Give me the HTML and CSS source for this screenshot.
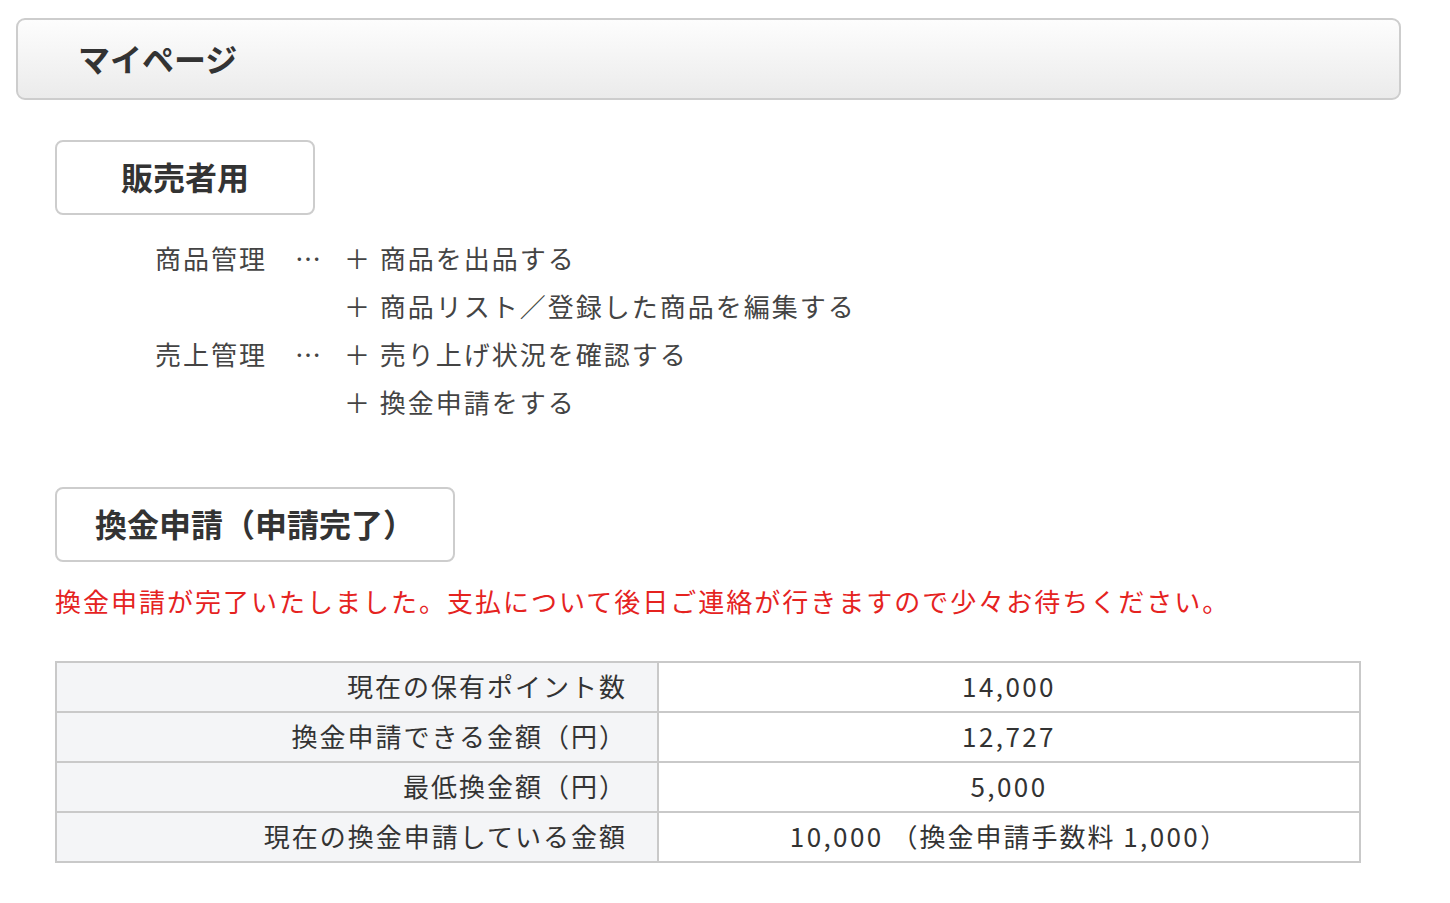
FILE: index.html
```html
<!DOCTYPE html>
<html lang="ja">
<head>
<meta charset="utf-8">
<title>マイページ</title>
<link rel="stylesheet" href="styles.css">
</head>
<body>
<div class="page">
  <header class="page-head">
    <h1 class="page-title">マイページ</h1>
  </header>

  <section class="section seller">
    <h2 class="section-title title-narrow">販売者用</h2>
    <div class="menu">
      <div class="menu-label">商品管理</div>
      <div class="menu-dots">…</div>
      <div class="menu-item">＋ 商品を出品する</div>
      <div class="menu-label"></div>
      <div class="menu-dots"></div>
      <div class="menu-item">＋ 商品リスト／登録した商品を編集する</div>
      <div class="menu-label">売上管理</div>
      <div class="menu-dots">…</div>
      <div class="menu-item">＋ 売り上げ状況を確認する</div>
      <div class="menu-label"></div>
      <div class="menu-dots"></div>
      <div class="menu-item">＋ 換金申請をする</div>
    </div>
  </section>

  <section class="section exchange">
    <h2 class="section-title title-wide">換金申請（申請完了）</h2>
    <p class="notice">換金申請が完了いたしました。支払について後日ご連絡が行きますので少々お待ちください。</p>
    <table class="info">
      <tr><th>現在の保有ポイント数</th><td><span class="num">14,000</span></td></tr>
      <tr><th>換金申請できる金額（円）</th><td><span class="num">12,727</span></td></tr>
      <tr><th>最低換金額（円）</th><td><span class="num">5,000</span></td></tr>
      <tr><th>現在の換金申請している金額</th><td><span class="num">10,000</span> （換金申請手数料 <span class="num">1,000</span>）</td></tr>
    </table>
  </section>
</div>
</body>
</html>
```

FILE: styles.css
```css
* { box-sizing: border-box; }

body {
  margin: 0;
  background: #fff;
  color: #333;
  font-family: "Noto Sans CJK JP", "Noto Sans", sans-serif;
}

.page {
  width: 1385px;
  margin-left: 16px;
  padding-top: 18px;
}

.page-head {
  height: 82px;
  border: 2px solid #cdcdcd;
  border-radius: 9px;
  background: linear-gradient(#fdfdfd, #ebebeb);
  display: flex;
  align-items: center;
  padding-left: 60px;
}

.page-title {
  margin: 0;
  font-size: 32px;
  font-weight: 700;
  line-height: 1;
  color: #333;
  padding-bottom: 2px;
}

.section {
  margin-left: 39px;
}

.seller { margin-top: 40px; }
.exchange { margin-top: 62px; }

.section-title {
  margin: 0;
  height: 75px;
  border: 2px solid #cdcdcd;
  border-radius: 8px;
  background: #fff;
  display: flex;
  align-items: center;
  justify-content: center;
  font-size: 32px;
  font-weight: 700;
  color: #333;
  line-height: 1;
  padding-bottom: 3px;
}

.title-narrow { width: 260px; }
.title-wide { width: 400px; }

.menu {
  margin-top: 18px;
  padding-left: 100px;
  display: grid;
  grid-template-columns: 140px 49px auto;
  grid-auto-rows: 48px;
  align-items: center;
  font-size: 26px;
  letter-spacing: 2px;
  color: #444;
}

.menu-dots { letter-spacing: 0; }

.notice {
  margin: 15px 0 0;
  line-height: 48px;
  font-size: 26px;
  letter-spacing: 2px;
  color: #e5231f;
}

.info {
  margin-top: 36px;
  width: 1306px;
  border-collapse: collapse;
  font-size: 26px;
  letter-spacing: 2px;
  color: #333;
}

.info th,
.info td {
  border: 2px solid #c9c9c9;
  height: 50px;
  padding: 0;
  font-weight: 400;
  line-height: 1;
  padding-bottom: 2px;
}

.info th {
  width: 602px;
  background: #f4f5f7;
  text-align: right;
  padding-right: 30px;
}

.info td {
  text-align: center;
  background: #fff;
}

.num {
  letter-spacing: 2.4px;
}
```
